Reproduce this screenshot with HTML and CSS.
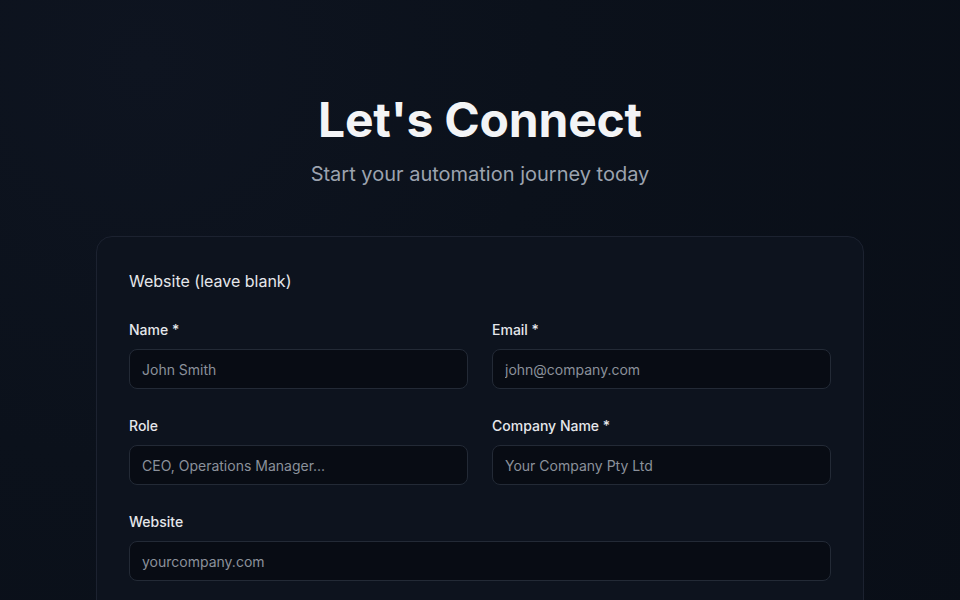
FILE: index.html
```html
<!DOCTYPE html>
<html lang="en">
<head>
<meta charset="UTF-8" />
<meta name="viewport" content="width=device-width, initial-scale=1" />
<title>Let's Connect</title>
<link rel="stylesheet" href="styles.css">
</head>
<body>

  <section class="contact">
    <header class="contact-head">
      <h1>Let's Connect</h1>
      <p>Start your automation journey today</p>
    </header>

    <form class="contact-card" onsubmit="return false">
      <label class="honeypot" for="hp">Website (leave blank)</label>

      <div class="fields">
        <div class="field">
          <label for="name">Name *</label>
          <input id="name" type="text" placeholder="John Smith">
        </div>
        <div class="field">
          <label for="email">Email *</label>
          <input id="email" type="email" placeholder="john@company.com">
        </div>

        <div class="field">
          <label for="role">Role</label>
          <input id="role" type="text" placeholder="CEO, Operations Manager...">
        </div>
        <div class="field">
          <label for="company">Company Name *</label>
          <input id="company" type="text" placeholder="Your Company Pty Ltd">
        </div>

        <div class="field field-wide">
          <label for="website">Website</label>
          <input id="website" type="text" placeholder="yourcompany.com">
        </div>
      </div>
    </form>
  </section>

</body>
</html>
```

FILE: styles.css
```css
* {
  box-sizing: border-box;
}

body {
  margin: 0;
  min-height: 100vh;
  background: #0b111b;
  background-image: radial-gradient(circle at 15% 10%, #0e1420 0%, #0b111b 40%, #090e17 100%);
  color: #f3f4f6;
  font-family: Inter, 'Noto Sans', sans-serif;
}

.contact {
  width: 768px;
  margin: 0 auto;
  padding-top: 90px;
}

.contact-head {
  text-align: center;
  margin-bottom: 48px;
}

.contact-head h1 {
  margin: 0;
  font-size: 48px;
  line-height: 60px;
  font-weight: 700;
  color: #f3f4f6;
  letter-spacing: -0.2px;
}

.contact-head p {
  margin: 10px 0 0;
  font-size: 20px;
  line-height: 28px;
  color: #9ca3af;
}

.contact-card {
  background: #0d131e;
  border: 1px solid #1c2230;
  border-radius: 16px;
  padding: 32px;
  min-height: 400px;
}

.honeypot {
  display: block;
  font-size: 16px;
  line-height: 24px;
  color: #e5e7eb;
  margin-bottom: 27px;
}

.fields {
  display: grid;
  grid-template-columns: 1fr 1fr;
  column-gap: 24px;
  row-gap: 27px;
}

.field-wide {
  grid-column: span 2;
}

.field label {
  display: block;
  font-size: 14px;
  line-height: 20px;
  font-weight: 500;
  color: #e5e7eb;
  margin-bottom: 9px;
}

.field input {
  display: block;
  width: 100%;
  height: 40px;
  padding: 0 12px;
  background: #080c14;
  border: 1px solid #232a36;
  border-radius: 8px;
  color: #e5e7eb;
  font-family: inherit;
  font-size: 14px;
  outline: none;
}

.field input::placeholder {
  color: #8b919b;
}

.field input:focus {
  border-color: #3b82f6;
}
```
